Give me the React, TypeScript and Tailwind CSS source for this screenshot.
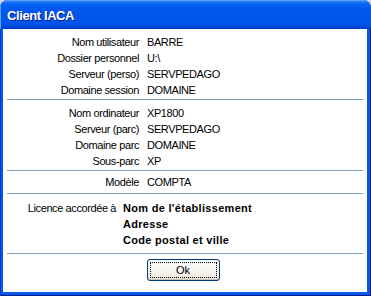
import React from 'react';

// Rows of the first three blocks: label on the left, value on the right
type Row = { label: string; value: string };

const session: Row[] = [
  { label: 'Nom utilisateur', value: 'BARRE' },
  { label: 'Dossier personnel', value: 'U:\\' },
  { label: 'Serveur (perso)', value: 'SERVPEDAGO' },
  { label: 'Domaine session', value: 'DOMAINE' },
];

const poste: Row[] = [
  { label: 'Nom ordinateur', value: 'XP1800' },
  { label: 'Serveur (parc)', value: 'SERVPEDAGO' },
  { label: 'Domaine parc', value: 'DOMAINE' },
  { label: 'Sous-parc', value: 'XP' },
];

const Separator = () => <div className="mx-[4px] h-px shrink-0 bg-[#7f9db9]" />;

const InfoBlock = ({ rows, className }: { rows: Row[]; className: string }) => (
  <div className={`grid grid-cols-[136px_1fr] gap-x-[8px] tracking-[-0.4px] ${className}`}>
    {rows.map((r) => (
      <React.Fragment key={r.label}>
        <div className="h-[16px] text-right leading-[16px]">{r.label}</div>
        <div className="h-[16px] leading-[16px]">{r.value}</div>
      </React.Fragment>
    ))}
  </div>
);

export default function App() {
  return (
    <div className="h-[296px] w-[371px] bg-[#d6d3ea] font-['Liberation_Sans',Arial,sans-serif] text-[11px] text-black">
      <div className="flex h-full flex-col overflow-hidden rounded-t-[8px] bg-[#0a58e8]">
        {/* Title bar */}
        <div className="flex h-[29px] shrink-0 items-center bg-[linear-gradient(to_bottom,#3a8dff_0%,#0a6af5_12%,#0058ee_30%,#0055e8_80%,#0048d8_92%,#003cc4_100%)] pl-[7px] pt-[2px] shadow-[inset_1px_1px_#5aa0ff]">
          <span className="text-[13px] font-bold tracking-[-0.4px] text-white [text-shadow:1px_1px_#0a1e8a]">Client IACA</span>
        </div>

        {/* Window body */}
        <div className="flex flex-1 flex-col pb-[4px] pl-[3px] pr-[4px] shadow-[inset_1px_0_#0040d0,inset_-1px_0_#001a9c,inset_0_-1px_#001a9c]">
          <div className="flex flex-1 flex-col bg-white">
            <InfoBlock rows={session} className="pb-[1px] pt-[5px]" />
            <Separator />
            <InfoBlock rows={poste} className="pb-[1px] pt-[5px]" />
            <Separator />
            <InfoBlock rows={[{ label: 'Modèle', value: 'COMPTA' }]} className="py-[3px]" />
            <Separator />

            {/* Licence */}
            <div className="grid grid-cols-[113px_1fr] gap-x-[7px] pb-[5px] pt-[6px]">
              <div className="h-[16px] text-right leading-[16px] tracking-[-0.4px]">Licence accordée à</div>
              <div className="h-[16px] font-bold leading-[16px] tracking-[0.3px]">Nom de l'établissement</div>
              <div />
              <div className="h-[16px] font-bold leading-[16px] tracking-[0.3px]">Adresse</div>
              <div />
              <div className="h-[16px] font-bold leading-[16px] tracking-[0.3px]">Code postal et ville</div>
            </div>
            <Separator />

            {/* Ok button */}
            <div className="flex justify-center pr-[4px] pt-[5px]">
              <button className="h-[22px] w-[73px] rounded-[3px] border border-[#003c74] bg-[linear-gradient(to_bottom,#ffffff_0%,#f4f3ee_60%,#e3e1d6_100%)] p-[2px] shadow-[inset_0_-1px_#c9c6b5]">
                <div className="flex h-full items-center justify-center border border-dotted border-black leading-none">Ok</div>
              </button>
            </div>
          </div>
        </div>
      </div>
    </div>
  );
}
